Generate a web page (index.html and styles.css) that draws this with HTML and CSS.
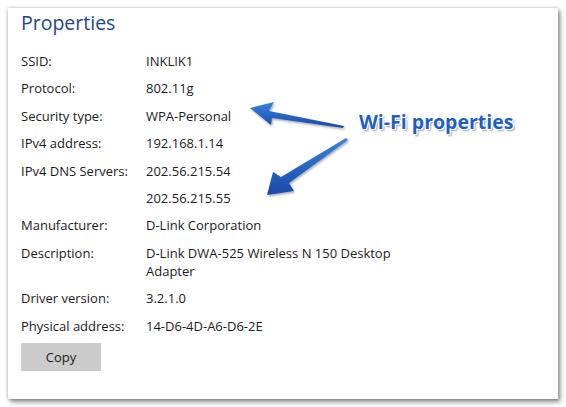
FILE: index.html
```html
<!DOCTYPE html>
<html lang="en">
<head>
  <meta charset="UTF-8">
  <title>Wi-Fi Properties</title>
  <link rel="stylesheet" href="styles.css">
</head>
<body>

<div class="stage">
  <div class="panel">
    <h1 class="title">Properties</h1>

    <div class="props">
      <div class="label">SSID:</div>
      <div class="value">INKLIK1</div>

      <div class="label">Protocol:</div>
      <div class="value">802.11g</div>

      <div class="label">Security type:</div>
      <div class="value">WPA-Personal</div>

      <div class="label">IPv4 address:</div>
      <div class="value">192.168.1.14</div>

      <div class="label">IPv4 DNS Servers:</div>
      <div class="value">202.56.215.54</div>

      <div class="label"></div>
      <div class="value">202.56.215.55</div>

      <div class="label">Manufacturer:</div>
      <div class="value">D-Link Corporation</div>

      <div class="label">Description:</div>
      <div class="value">D-Link DWA-525 Wireless N 150 Desktop Adapter</div>

      <div class="label">Driver version:</div>
      <div class="value">3.2.1.0</div>

      <div class="label">Physical address:</div>
      <div class="value">14-D6-4D-A6-D6-2E</div>
    </div>

    <button class="copy">Copy</button>
  </div>

  <!-- annotation drawn over the screenshot -->
  <svg class="arrows" width="566" height="407" viewBox="0 0 566 407">
    <defs>
      <linearGradient id="arrowFill" x1="0" y1="0" x2="0" y2="1">
        <stop offset="0" stop-color="#3a82e0"/>
        <stop offset="1" stop-color="#1849a6"/>
      </linearGradient>
      <filter id="arrowShadow" x="-20%" y="-40%" width="140%" height="180%">
        <feDropShadow dx="1" dy="1.5" stdDeviation="1.2" flood-color="#000" flood-opacity="0.35"/>
      </filter>
    </defs>
    <polygon fill="url(#arrowFill)" filter="url(#arrowShadow)"
      points="250,108 274,102 269,111 344,126 343,128 272,118 271,125"/>
    <polygon fill="url(#arrowFill)" filter="url(#arrowShadow)"
      points="267,195 273,172 281,177 346,138 348,140 289,183 294,191"/>
  </svg>
  <div class="callout">Wi-Fi properties</div>
</div>

</body>
</html>
```

FILE: styles.css
```css
body {
  margin: 0;
  background: #fff;
  font-family: 'Open Sans', 'Noto Sans', sans-serif;
  color: #1b1b1b;
}
.stage {
  position: relative;
  width: 566px;
  height: 407px;
  overflow: hidden;
}
.panel {
  margin: 8px 0 0 8px;
  width: 550px;
  height: 391px;
  box-sizing: border-box;
  padding: 0 13px;
  background: #fff;
  box-shadow: 2px 3px 5px rgba(0, 0, 0, 0.45), 0 0 3px rgba(0, 0, 0, 0.25);
}
.title {
  margin: 0;
  padding-top: 2px;
  font-size: 19.5px;
  font-weight: 400;
  line-height: 26px;
  color: #23468a;
}
.props {
  display: grid;
  grid-template-columns: 125px 250px;
  row-gap: 9.4px;
  margin-top: 16px;
  font-size: 13px;
  line-height: 18px;
}
.copy {
  display: block;
  margin-top: 8px;
  width: 80px;
  height: 28px;
  border: none;
  background: #cccccc;
  font-family: inherit;
  font-size: 13px;
  color: #1b1b1b;
}
.arrows {
  position: absolute;
  left: 0;
  top: 0;
}
.callout {
  position: absolute;
  left: 359px;
  top: 109px;
  font-size: 19.5px;
  font-weight: 700;
  line-height: 26px;
  color: #1f5fc4;
  text-shadow:
    -1px -1px 0 #fff, 1px -1px 0 #fff, -1px 1px 0 #fff, 1px 1px 0 #fff,
    2px 2px 2px rgba(0, 0, 0, 0.4);
}
```
